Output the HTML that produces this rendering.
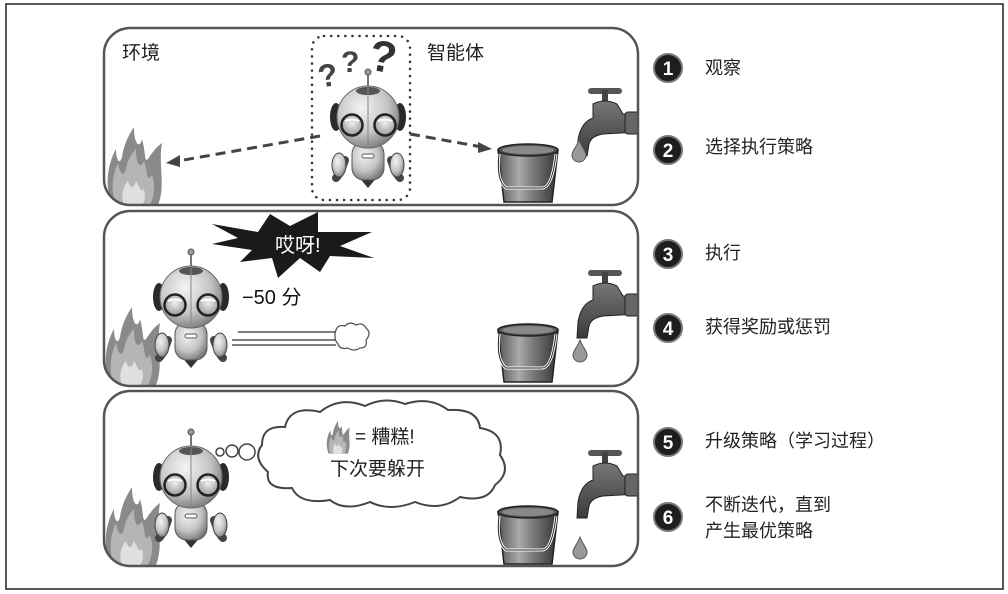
<!DOCTYPE html>
<html><head><meta charset="utf-8"><style>
html,body{margin:0;padding:0;background:#fff;width:1008px;height:594px;overflow:hidden}
svg{display:block}
text{font-family:"Liberation Sans","Noto Sans CJK SC",sans-serif}
</style></head><body>
<svg width="1008" height="594" viewBox="0 0 1008 594" xmlns="http://www.w3.org/2000/svg">
<defs>
<radialGradient id="hg" cx="0.4" cy="0.35" r="0.7"><stop offset="0" stop-color="#f4f4f4"/><stop offset="0.6" stop-color="#c4c4c4"/><stop offset="1" stop-color="#777"/></radialGradient>
<radialGradient id="eg" cx="0.5" cy="0.4" r="0.6"><stop offset="0" stop-color="#f0f0f0"/><stop offset="1" stop-color="#999"/></radialGradient>
<linearGradient id="bk" x1="0" x2="1"><stop offset="0" stop-color="#555"/><stop offset="0.35" stop-color="#aaa"/><stop offset="0.6" stop-color="#777"/><stop offset="1" stop-color="#333"/></linearGradient>
<linearGradient id="fc" x1="0" x2="0" y1="0" y2="1"><stop offset="0" stop-color="#777"/><stop offset="1" stop-color="#3a3a3a"/></linearGradient>
<clipPath id="c1"><rect x="104" y="28" width="534" height="177" rx="26"/></clipPath>
<clipPath id="c2"><rect x="104" y="211" width="534" height="175" rx="26"/></clipPath>
<clipPath id="c3"><rect x="104" y="391" width="534" height="175" rx="26"/></clipPath>
<g id="robot">
 <line x1="368" y1="72" x2="368" y2="92" stroke="#777" stroke-width="2"/>
 <circle cx="368" cy="72" r="3" fill="#999" stroke="#555"/>
 <ellipse cx="336" cy="117" rx="6" ry="14" fill="#2a2a2a"/>
 <ellipse cx="400" cy="117" rx="6" ry="14" fill="#2a2a2a"/>
 <path d="M345 160 Q340 175 336 178" stroke="#444" stroke-width="8" fill="none" stroke-linecap="round"/>
 <path d="M391 160 Q396 175 400 178" stroke="#444" stroke-width="8" fill="none" stroke-linecap="round"/>
 <ellipse cx="339" cy="165" rx="7" ry="12" fill="url(#hg)" stroke="#444"/>
 <ellipse cx="397" cy="165" rx="7" ry="12" fill="url(#hg)" stroke="#444"/>
 <path d="M358 176 L368 188 L378 176 Z" fill="#333"/>
 <rect x="352" y="142" width="32" height="38" rx="12" fill="url(#hg)" stroke="#555"/>
 <rect x="362" y="154" width="12" height="4" rx="2" fill="#fff" stroke="#555"/>
 <circle cx="368" cy="117" r="31" fill="url(#hg)" stroke="#666"/>
 <ellipse cx="368" cy="91" rx="12" ry="4" fill="#555"/>
 <line x1="368" y1="88" x2="368" y2="148" stroke="#888" stroke-width="1"/>
 <circle cx="352" cy="125" r="10.5" fill="url(#eg)" stroke="#222" stroke-width="2.5"/>
 <circle cx="385" cy="125" r="10.5" fill="url(#eg)" stroke="#222" stroke-width="2.5"/>
 <path d="M345 121 Q352 118 359 121" stroke="#fff" stroke-width="2" fill="none"/>
 <path d="M378 121 Q385 118 392 121" stroke="#fff" stroke-width="2" fill="none"/>
</g>
<g id="flame">
 <path d="M4 80 C-4 60 0 38 8 24 C8 36 12 40 14 32 C16 18 22 8 26 2 C26 20 32 24 34 14 C38 28 36 38 40 34 C44 28 48 22 54 18 C50 40 58 60 50 80 Z" fill="#8a8a8a"/>
 <path d="M8 80 C2 65 5 48 10 38 C12 50 16 52 18 44 C20 34 24 28 28 24 C28 40 32 44 36 36 C40 48 38 58 44 50 C48 62 46 72 42 80 Z" fill="#b5b5b5"/>
 <path d="M16 80 C12 70 16 60 20 56 C22 64 26 64 28 56 C32 62 32 68 36 64 C38 72 36 78 34 80 Z" fill="#e0e0e0"/>
</g>
<g id="bucket">
 <path d="M0 10 L60 10 L54 62 L6 62 Z" fill="url(#bk)" stroke="#222" stroke-width="1.5"/>
 <ellipse cx="30" cy="10" rx="30" ry="6" fill="#555" stroke="#222" stroke-width="1.5"/>
 <ellipse cx="30" cy="10" rx="26" ry="4" fill="#888"/>
 <path d="M1 14 Q-2 40 8 48 L44 48 Q54 48 58 14" fill="none" stroke="#fff" stroke-width="3"/>
 <path d="M1 14 Q-2 40 8 48 L44 48 Q54 48 58 14" fill="none" stroke="#222" stroke-width="1"/>
</g>
<g id="faucet">
 <rect x="15" y="8" width="34" height="6" rx="3" fill="#555"/>
 <rect x="29" y="10" width="6" height="14" fill="#444"/>
 <path d="M20 24 Q32 18 44 24 L50 34 L65 34 L65 52 L30 54 Q18 56 16 64 L14 76 L4 76 L5 60 Q8 42 20 38 Z" fill="url(#fc)" stroke="#222"/>
 <rect x="52" y="32" width="14" height="22" rx="3" fill="#666" stroke="#222"/>
</g>
<path id="drop" d="M0 0 C3 8 7 11 7 15 A7 7 0 0 1 -7 15 C-7 11 -3 8 0 0 Z" fill="#999" stroke="#555"/>
</defs>

<rect x="6" y="4" width="997" height="585" fill="#fff" stroke="#222" stroke-width="1.5"/>

<!-- panel 1 -->
<g clip-path="url(#c1)">
<use href="#flame" transform="translate(108,125)"/>
<use href="#bucket" transform="translate(498,140)"/>
<use href="#faucet" transform="translate(573,80)"/>
</g>
<rect x="104" y="28" width="534" height="177" rx="26" fill="none" stroke="#555" stroke-width="2.5"/>
<text x="122" y="59" font-size="19" fill="#222">环境</text>
<text x="427" y="59" font-size="19" fill="#222">智能体</text>
<rect x="312" y="36" width="98" height="164" rx="12" fill="none" stroke="#333" stroke-width="2.5" stroke-dasharray="0.1 7" stroke-linecap="round"/>
<text x="318" y="86" font-size="32" font-weight="bold" fill="#444" transform="rotate(-10 330 75)">?</text>
<text x="341" y="72" font-size="30" font-weight="bold" fill="#444">?</text>
<text x="370" y="72" font-size="44" font-weight="bold" fill="#333" transform="rotate(10 385 55)">?</text>
<line x1="320" y1="136" x2="178" y2="161" stroke="#444" stroke-width="3" stroke-dasharray="10 6"/>
<path d="M166 163 L180 155 L180 167 Z" fill="#444"/>
<line x1="410" y1="134" x2="482" y2="147" stroke="#444" stroke-width="3" stroke-dasharray="10 6"/>
<path d="M492 149 L478 142 L478 153 Z" fill="#444"/>
<use href="#robot"/>
<use href="#drop" transform="translate(579,140)"/>

<!-- panel 2 -->
<g clip-path="url(#c2)">
<use href="#flame" transform="translate(106,305)"/>
<use href="#bucket" transform="translate(498,320)"/>
<use href="#faucet" transform="translate(573,262)"/>
</g>
<rect x="104" y="211" width="534" height="175" rx="26" fill="none" stroke="#555" stroke-width="2.5"/>
<path d="M212 224 L258 232 L270 214 L290 226 L318 212 L318 232 L372 232 L340 246 L374 258 L330 256 L320 272 L300 258 L278 278 L272 258 L240 262 L252 250 L212 244 L238 238 Z" fill="#1a1a1a"/>
<text x="275" y="252" font-size="20" fill="#fff">哎呀!</text>
<text x="242" y="304" font-size="20" fill="#111" font-family="Liberation Serif,Noto Serif CJK SC,serif">−50 分</text>
<line x1="238" y1="332" x2="336" y2="332" stroke="#555" stroke-width="1.5"/>
<line x1="232" y1="340" x2="336" y2="340" stroke="#555" stroke-width="1.5"/>
<line x1="232" y1="345" x2="336" y2="345" stroke="#555" stroke-width="1.5"/>
<path d="M336 330 Q338 324 345 326 Q350 321 356 325 Q363 322 366 328 Q372 333 366 340 Q368 348 360 348 Q354 352 348 348 Q340 350 338 344 Q333 338 336 330 Z" fill="#fff" stroke="#555" stroke-width="1.3"/>
<use href="#robot" transform="translate(-177,180)"/>
<use href="#drop" transform="translate(580,340)"/>

<!-- panel 3 -->
<g clip-path="url(#c3)">
<use href="#flame" transform="translate(106,485)"/>
<use href="#bucket" transform="translate(498,502)"/>
<use href="#faucet" transform="translate(573,442)"/>
</g>
<rect x="104" y="391" width="534" height="175" rx="26" fill="none" stroke="#555" stroke-width="2.5"/>
<circle cx="220" cy="452" r="4" fill="#fff" stroke="#444" stroke-width="1.5"/>
<circle cx="232" cy="451" r="6" fill="#fff" stroke="#444" stroke-width="1.5"/>
<circle cx="247" cy="452" r="8" fill="#fff" stroke="#444" stroke-width="1.5"/>
<path d="M262 445 Q262 425 285 427 Q290 405 320 412 Q340 396 365 406 Q385 396 405 404 Q430 396 448 410 Q478 408 480 428 Q505 432 500 455 Q512 472 495 485 Q488 503 460 497 Q440 512 415 502 Q390 512 370 502 Q345 512 330 500 Q300 505 292 488 Q265 490 268 472 Q252 458 262 445 Z" fill="#fff" stroke="#444" stroke-width="2"/>
<use href="#flame" transform="translate(327,420) scale(0.42)"/>
<text x="355" y="443" font-size="19" fill="#222">= 糟糕!</text>
<text x="330" y="475" font-size="19" fill="#222">下次要躲开</text>
<use href="#robot" transform="translate(-177,360)"/>
<use href="#drop" transform="translate(580,537)"/>

<!-- right column -->
<g font-size="18" fill="#222">
<circle cx="668" cy="68" r="14" fill="#1e1e1e" stroke="#777" stroke-width="2"/><text x="668" y="75" font-size="19" font-weight="bold" fill="#fff" text-anchor="middle">1</text>
<text x="705" y="74">观察</text>
<circle cx="668" cy="150" r="14" fill="#1e1e1e" stroke="#777" stroke-width="2"/><text x="668" y="157" font-size="19" font-weight="bold" fill="#fff" text-anchor="middle">2</text>
<text x="705" y="153">选择执行策略</text>
<circle cx="668" cy="254" r="14" fill="#1e1e1e" stroke="#777" stroke-width="2"/><text x="668" y="261" font-size="19" font-weight="bold" fill="#fff" text-anchor="middle">3</text>
<text x="705" y="259">执行</text>
<circle cx="668" cy="328" r="14" fill="#1e1e1e" stroke="#777" stroke-width="2"/><text x="668" y="335" font-size="19" font-weight="bold" fill="#fff" text-anchor="middle">4</text>
<text x="705" y="333">获得奖励或惩罚</text>
<circle cx="668" cy="442" r="14" fill="#1e1e1e" stroke="#777" stroke-width="2"/><text x="668" y="449" font-size="19" font-weight="bold" fill="#fff" text-anchor="middle">5</text>
<text x="705" y="447">升级策略（学习过程）</text>
<circle cx="668" cy="517" r="14" fill="#1e1e1e" stroke="#777" stroke-width="2"/><text x="668" y="524" font-size="19" font-weight="bold" fill="#fff" text-anchor="middle">6</text>
<text x="705" y="511">不断迭代，直到</text>
<text x="705" y="537">产生最优策略</text>
</g>
</svg>
</body></html>
